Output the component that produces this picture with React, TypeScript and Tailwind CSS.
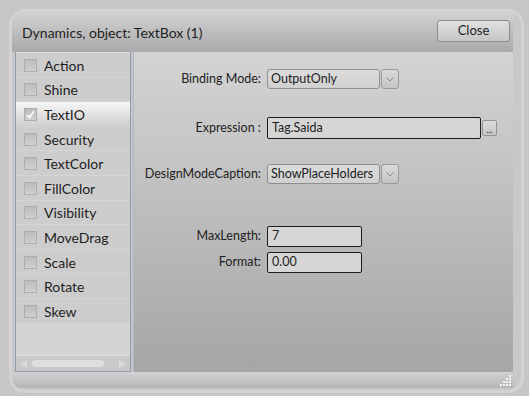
import React from 'react';

const items = [
  'Action',
  'Shine',
  'TextIO',
  'Security',
  'TextColor',
  'FillColor',
  'Visibility',
  'MoveDrag',
  'Scale',
  'Rotate',
  'Skew',
];

const Chevron = () => (
  <svg width="10" height="7" viewBox="0 0 10 7">
    <path d="M1.5 1.5 L5 5 L8.5 1.5" fill="none" stroke="#f4f4f6" strokeWidth="2.4" />
    <path d="M1.5 1.5 L5 5 L8.5 1.5" fill="none" stroke="#8f8f9a" strokeWidth="1.3" />
  </svg>
);

const Dropdown = ({ value }: { value: string }) => (
  <div className="flex h-[20px] gap-px">
    <div className="flex w-[113px] items-center rounded-[3px] border border-[#8e8e8e] bg-gradient-to-b from-[#dcdcdc] to-[#d0d0d0] pl-[3px] text-[12.5px]">
      {value}
    </div>
    <div className="flex w-[18px] items-center justify-center rounded-[3px] border border-[#9a9a9a] bg-gradient-to-b from-[#dadada] to-[#c4c4c4]">
      <Chevron />
    </div>
  </div>
);

const CheckBox = ({ checked }: { checked: boolean }) => (
  <div className="flex h-[13px] w-[13px] items-center justify-center border border-[#aeaeae] bg-gradient-to-b from-[#bcbcbc] to-[#d0d0d0]">
    {checked && (
      <svg width="11" height="11" viewBox="0 0 11 11">
        <path d="M2 6 L4.5 8.5 L9 2" fill="none" stroke="#ffffff" strokeWidth="1.6" />
      </svg>
    )}
  </div>
);

const Grip = () => (
  <svg width="12" height="11" viewBox="0 0 12 11">
    {[
      [9, 0], [9, 3], [6, 3], [9, 6], [6, 6], [3, 6], [9, 9], [6, 9], [3, 9], [0, 9],
    ].map(([x, y], i) => (
      <rect key={i} x={x} y={y} width="2" height="2" fill="#f2f4f8" />
    ))}
  </svg>
);

const App = () => {
  return (
    <div
      className="h-[396px] w-[529px] bg-[#c6c6c6] pb-[3px] pl-[9px] pr-[5px] pt-[9px] text-[#1e1e1e]"
      style={{ fontFamily: 'Lato, "Noto Sans", sans-serif' }}
    >
      <div className="flex h-full flex-col overflow-hidden rounded-[16px] border-[3px] border-[#d3d3d3] bg-[#c8c8c8] pr-[8px]">
        {/* header */}
        <div className="flex h-[40px] shrink-0 items-center justify-between rounded-tl-[12px] bg-gradient-to-b from-[#d2d2d2] to-[#a9a9a9] pl-[10px] pr-[3px]">
          <span className="mt-[1px] text-[14px]">Dynamics, object: TextBox (1)</span>
          <button className="mb-[2px] flex h-[22px] w-[73px] items-center justify-center rounded-[3px] border border-[#8c8c8c] bg-gradient-to-b from-[#e0e0e0] to-[#c6c6c6] text-[13px]">
            Close
          </button>
        </div>

        {/* body */}
        <div className="flex h-[320px] shrink-0 pl-[3px]">
          <div className="flex w-[116px] flex-col border-x border-b border-[#8f9cac] bg-[#d4d4d4]">
            <div className="flex flex-col gap-px border-t border-[#dedede]">
              {items.map((item) => {
                const active = item === 'TextIO';
                return (
                  <div
                    key={item}
                    className={
                      active
                        ? 'flex h-[23.6px] items-center gap-[7px] bg-gradient-to-b from-[#f6f6f6] to-[#cfcfcf] pl-[8px] pt-[1px] text-[14px]'
                        : 'flex h-[23.6px] items-center gap-[7px] bg-[#cdcdcd] pl-[8px] pt-[1px] text-[14px]'
                    }
                  >
                    <CheckBox checked={active} />
                    <span>{item}</span>
                  </div>
                );
              })}
            </div>
            <div className="flex-1" />
            <div className="flex h-[16px] items-center gap-[5px] border-t border-[#dcdcdc] bg-[#c9c9c9] px-[4px]">
              <span className="h-0 w-0 border-y-[4px] border-r-[7px] border-y-transparent border-r-[#dadada]" />
              <div className="h-[7px] w-[72px] rounded-full bg-[#dedede]" />
              <div className="flex-1" />
              <span className="h-0 w-0 border-y-[4px] border-l-[7px] border-y-transparent border-l-[#dadada]" />
            </div>
          </div>

          <div className="w-[2px] bg-[#c4c6ca]" />

          <div className="flex flex-1 flex-col border-l border-[#b0b7c0] bg-gradient-to-b from-[#d4d4d4] to-[#a6a6a6] pt-[17px] text-[12.5px]">
            <div className="flex items-center">
              <span className="w-[129px] pr-[2px] text-right">Binding Mode:</span>
              <div className="ml-[4px]">
                <Dropdown value="OutputOnly" />
              </div>
            </div>

            <div className="mt-[28px] flex items-center">
              <span className="w-[129px] pr-[2px] text-right">Expression :</span>
              <div className="ml-[4px] flex h-[22px] w-[214px] items-center rounded-[2px] border border-[#1c1c1c] bg-[#d6d6d6] pl-[4px]">
                Tag.Saida
              </div>
              <div className="ml-px flex h-[16px] w-[15px] items-end justify-center rounded-[2px] border border-[#959595] bg-gradient-to-b from-[#dcdcdc] to-[#c4c4c4] pb-[1px] text-[9px] leading-[9px]">
                ...
              </div>
            </div>

            <div className="mt-[25px] flex items-center">
              <span className="w-[129px] pr-[2px] text-right">DesignModeCaption:</span>
              <div className="ml-[4px]">
                <Dropdown value="ShowPlaceHolders" />
              </div>
            </div>

            <div className="mt-[42px] flex items-center">
              <span className="w-[129px] pr-[2px] text-right">MaxLength:</span>
              <div className="ml-[4px] flex h-[21px] w-[95px] items-center rounded-[2px] border border-[#1c1c1c] bg-[#d6d6d6] pl-[4px]">
                7
              </div>
            </div>

            <div className="mt-[5px] flex items-center">
              <span className="w-[129px] pr-[2px] text-right">Format:</span>
              <div className="ml-[4px] flex h-[21px] w-[95px] items-center rounded-[2px] border border-[#1c1c1c] bg-[#d6d6d6] pl-[4px]">
                0.00
              </div>
            </div>
          </div>
        </div>

        {/* footer */}
        <div className="flex h-[16px] shrink-0 items-center justify-end bg-gradient-to-b from-[#d2d2d2] to-[#b6b6b6] pr-[1px]">
          <Grip />
        </div>
      </div>
    </div>
  );
};

export default App;
